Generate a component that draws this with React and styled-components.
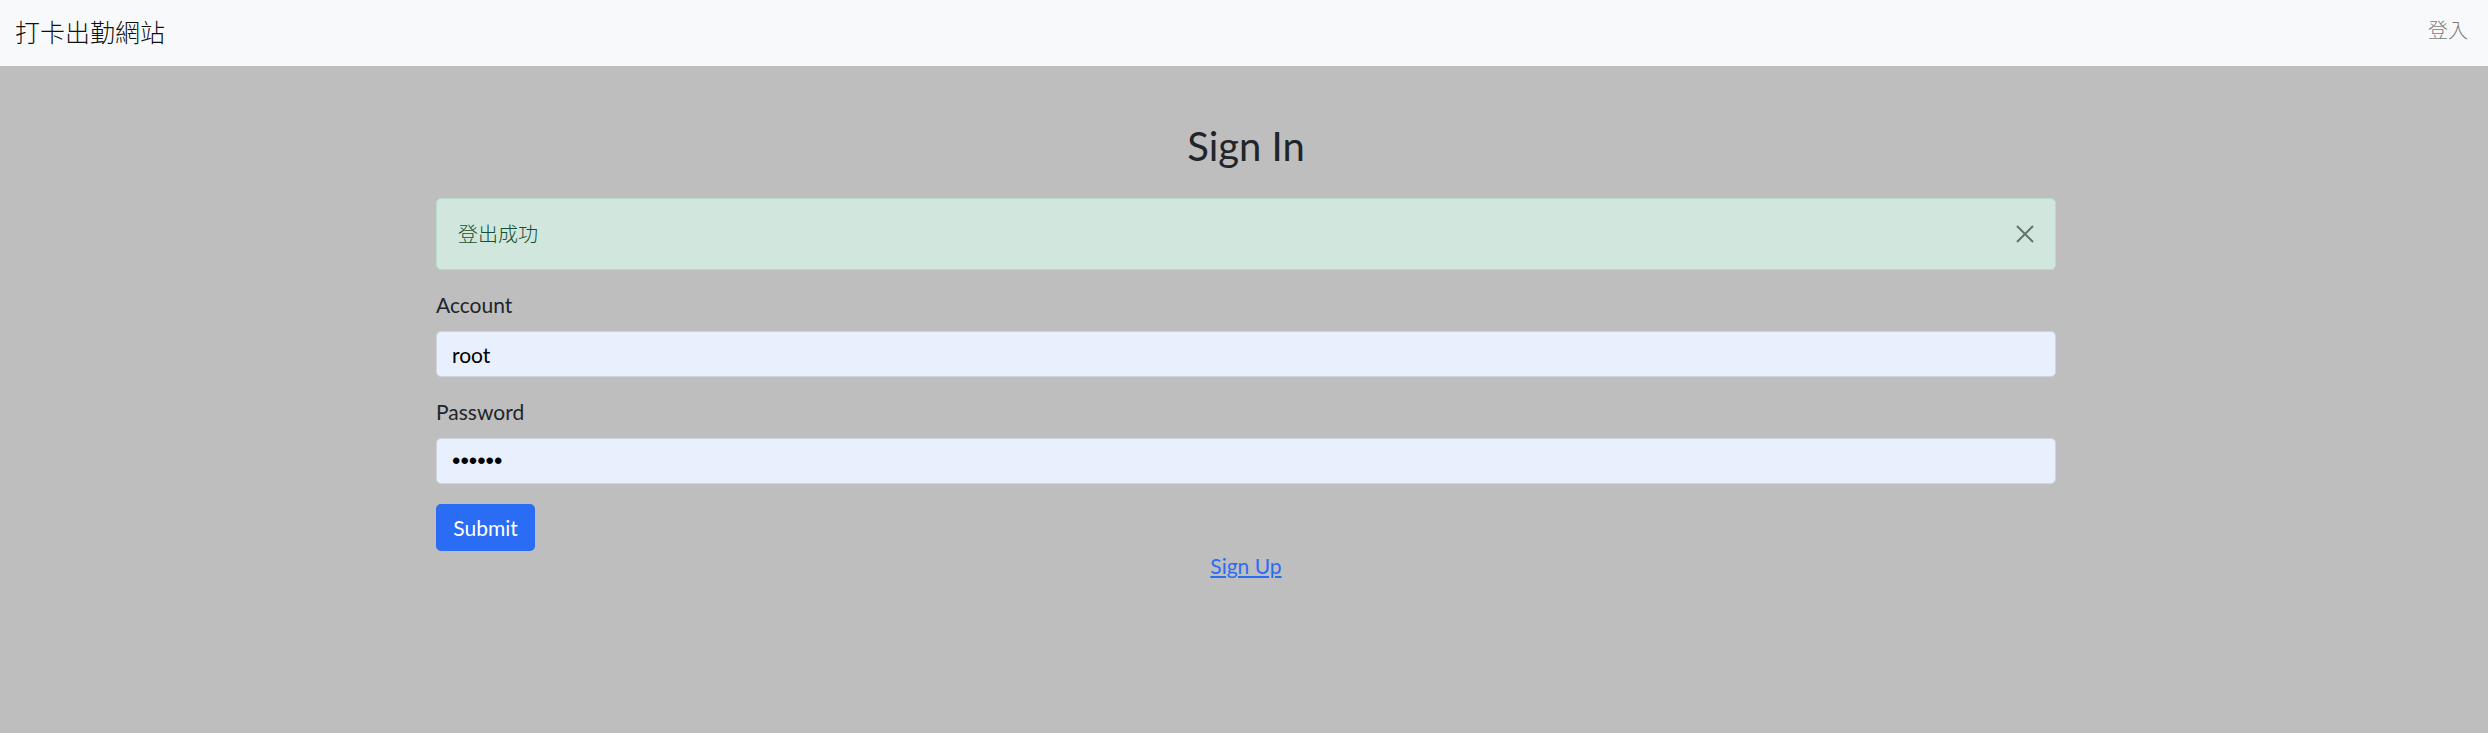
import React from "react";
import styled, { createGlobalStyle } from "styled-components";

const Global = createGlobalStyle`
  html, body { margin: 0; padding: 0; }
  body {
    background: #bebebe;
    font-family: Lato, "Noto Sans CJK TC", sans-serif;
    font-size: 21px;
    line-height: 30px;
    color: #212529;
    min-height: 733px;
  }
  * { box-sizing: border-box; }
`;

const Navbar = styled.nav`
  height: 66px;
  background: #f8f9fa;
  display: flex;
  align-items: center;
  justify-content: space-between;
  padding: 0 20px 0 15px;
`;

const Brand = styled.a`
  font-family: "Noto Sans CJK TC", sans-serif;
  font-size: 25px;
  font-weight: 300;
  line-height: 36px;
  color: rgba(0, 0, 0, 0.95);
  text-decoration: none;
  margin-top: -4px;
`;

const NavLink = styled.a`
  font-family: "Noto Sans CJK TC", sans-serif;
  font-size: 20px;
  font-weight: 300;
  line-height: 30px;
  color: rgba(0, 0, 0, 0.55);
  text-decoration: none;
  margin-top: -6px;
`;

const Container = styled.main`
  width: 1620px;
  margin-left: calc(50% - 808px);
  display: flex;
  flex-direction: column;
`;

const Title = styled.h2`
  margin: 56px 0 28px;
  font-size: 40px;
  line-height: 48px;
  font-weight: 400;
  text-align: center;
  color: #212529;
`;

const Alert = styled.div`
  height: 72px;
  background: #d1e7dd;
  border: 1px solid #badbcc;
  border-radius: 5px;
  color: #0f5132;
  display: flex;
  align-items: center;
  justify-content: space-between;
  padding: 0 20px 0 21px;
  margin-bottom: 20px;
  font-family: "Noto Sans CJK TC", sans-serif;
  font-size: 20px;
  font-weight: 300;
`;

const CloseButton = styled.button`
  width: 20px;
  height: 20px;
  padding: 0;
  border: 0;
  background: transparent;
  opacity: 0.5;
  display: flex;
  cursor: pointer;
`;

const Field = styled.div`
  display: flex;
  flex-direction: column;
  margin-bottom: 20px;
`;

const Label = styled.label`
  margin-bottom: 11px;
`;

const Input = styled.input`
  height: 46px;
  border: 1px solid #ced4da;
  border-radius: 5px;
  background: #e8f0fe;
  color: #000;
  font-family: ${(p) => (p.$secret ? '"Liberation Sans", sans-serif' : "Lato, sans-serif")};
  font-size: ${(p) => (p.$secret ? 24 : 21)}px;
  padding: 0 15px;
  outline: none;
`;

const Submit = styled.button`
  align-self: flex-start;
  width: 99px;
  height: 47px;
  background: #2b6cf5;
  color: #fff;
  border: 0;
  border-radius: 5px;
  font-family: Lato, sans-serif;
  font-size: 21px;
  cursor: pointer;
`;

const LinkRow = styled.div`
  text-align: center;
`;

const SignUp = styled.a`
  color: #2b6cf5;
  text-decoration: underline;
`;

export default function App() {
  return (
    <>
      <Global />
      <Navbar>
        <Brand href="#">打卡出勤網站</Brand>
        <NavLink href="#">登入</NavLink>
      </Navbar>
      <Container>
        <Title>Sign In</Title>
        <Alert>
          <span>登出成功</span>
          <CloseButton aria-label="Close">
            <svg width="20" height="20" viewBox="0 0 20 20">
              <path d="M2 2 L18 18 M18 2 L2 18" stroke="#000" strokeWidth="2" />
            </svg>
          </CloseButton>
        </Alert>
        <Field>
          <Label>Account</Label>
          <Input type="text" defaultValue="root" />
        </Field>
        <Field>
          <Label>Password</Label>
          <Input type="password" $secret defaultValue="123456" />
        </Field>
        <Submit>Submit</Submit>
        <LinkRow>
          <SignUp href="#">Sign Up</SignUp>
        </LinkRow>
      </Container>
    </>
  );
}
